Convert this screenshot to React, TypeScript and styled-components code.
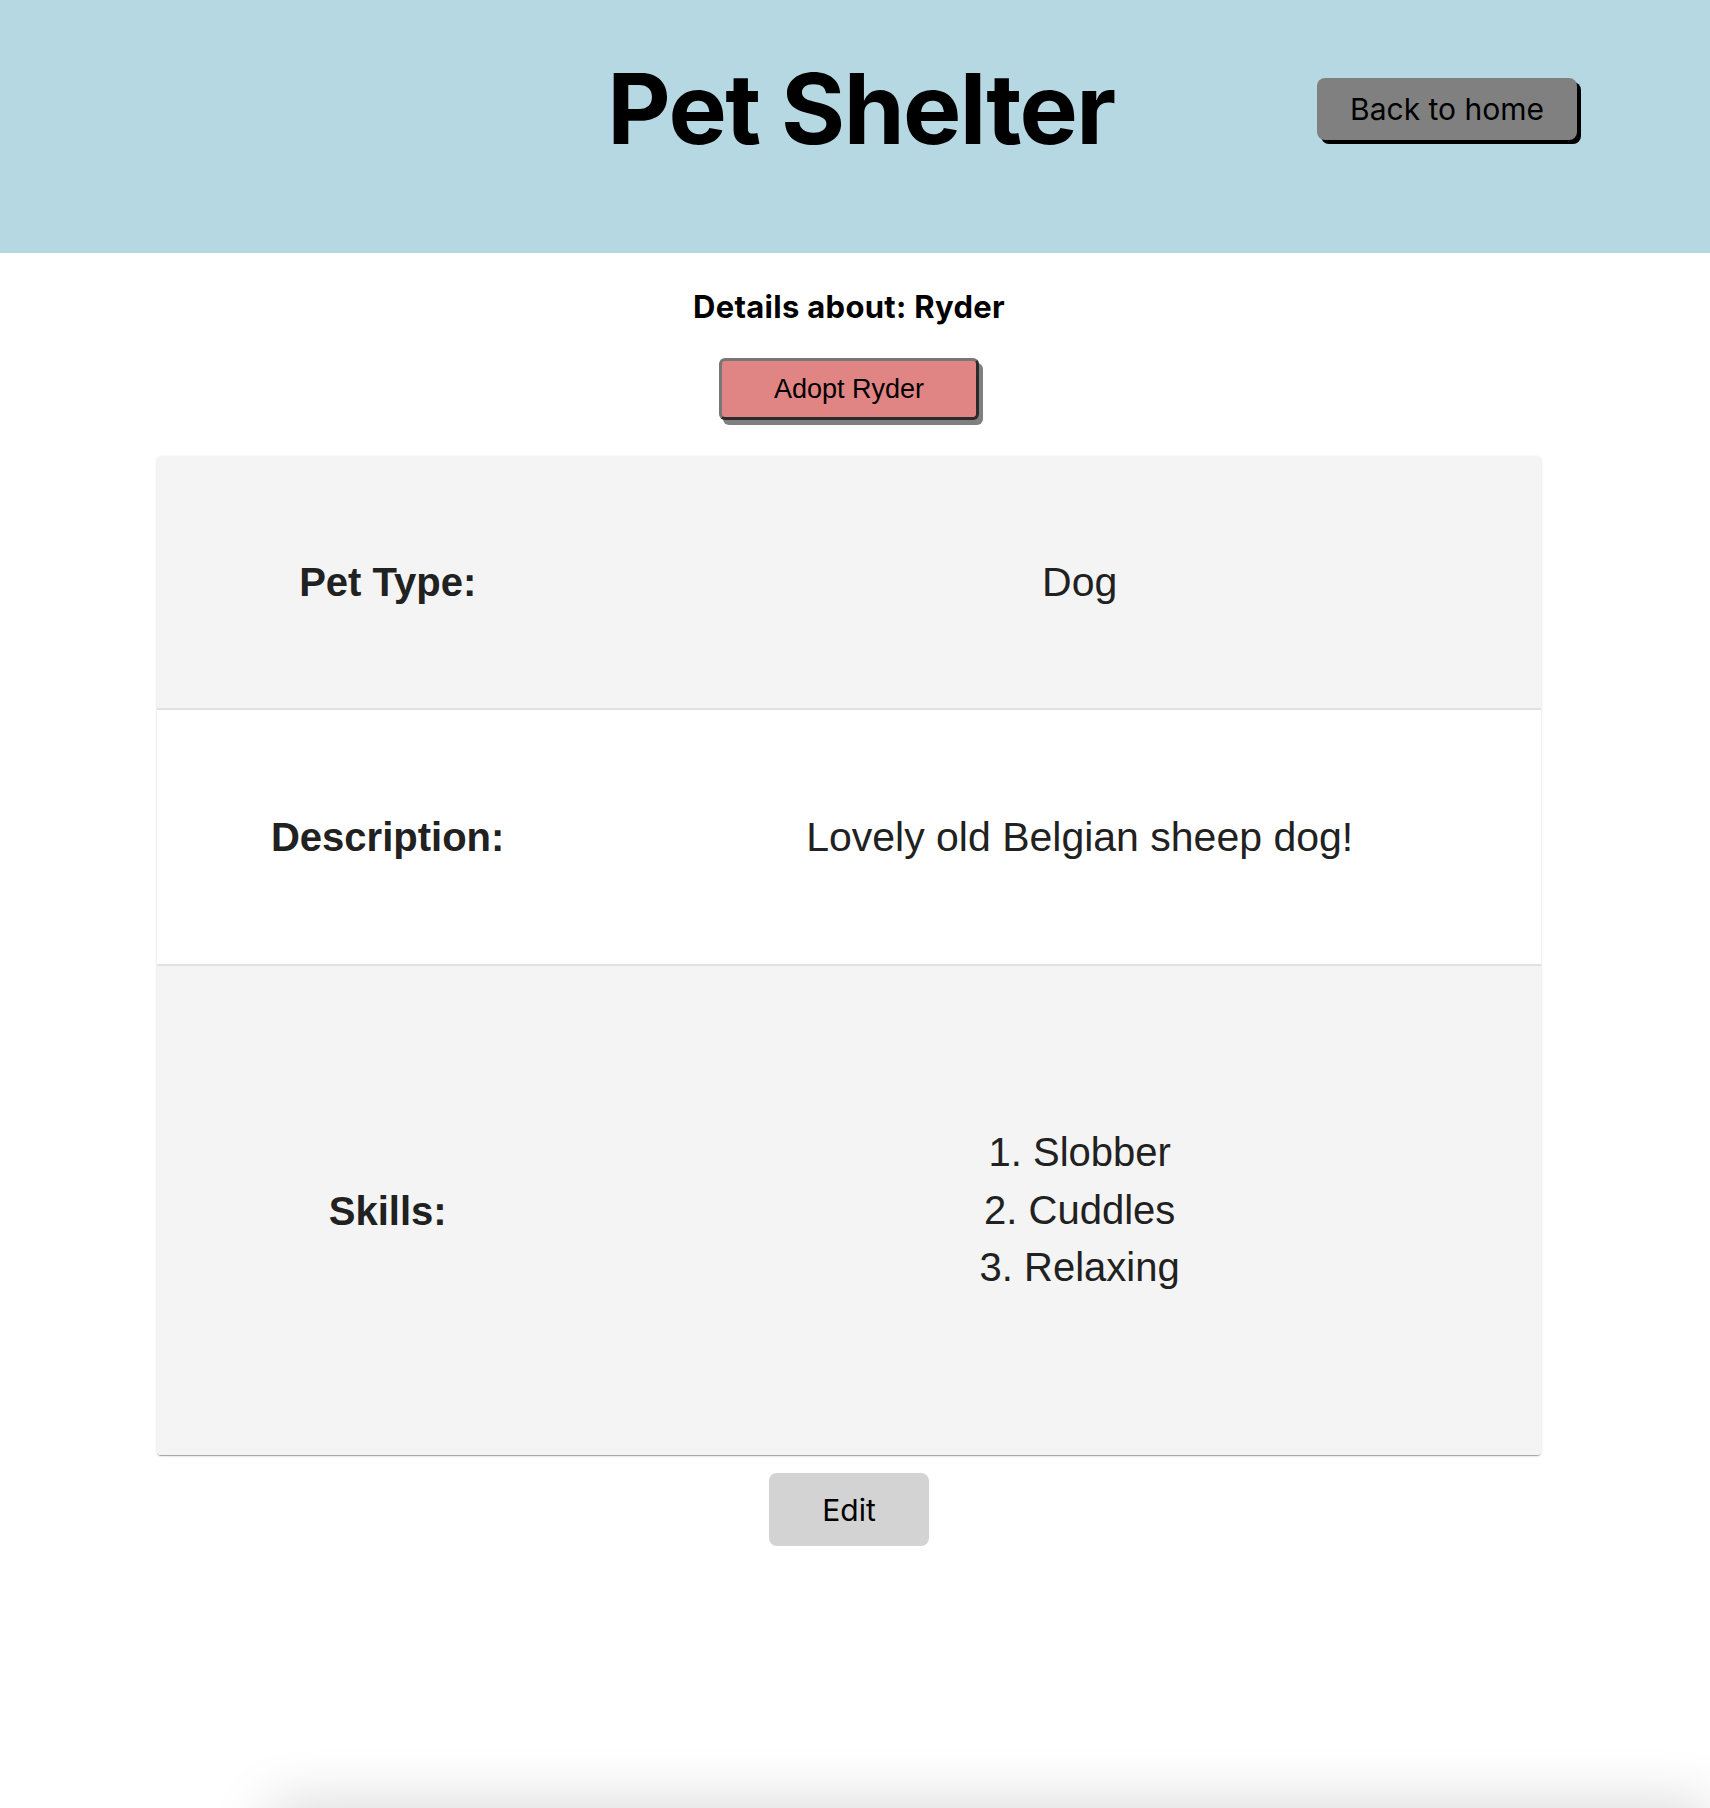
import React from "react";
import styled, { createGlobalStyle } from "styled-components";

const GlobalStyle = createGlobalStyle`
  html, body {
    margin: 0;
    padding: 0;
    background: #ffffff;
  }
  body {
    font-family: Inter, "Liberation Sans", Arial, sans-serif;
    color: #000;
  }
`;

const Page = styled.div`
  height: 1808px;
  overflow: hidden;
  display: flex;
  flex-direction: column;
`;

const Header = styled.header`
  flex-shrink: 0;
  box-sizing: border-box;
  height: 253px;
  padding-top: 54px;
  background: #b6d8e3;
  display: grid;
  grid-template-columns: 1fr auto 1fr;
  grid-template-rows: 110px;
  align-items: center;
`;

const Title = styled.h1`
  grid-column: 2;
  margin: 0 0 0 12px;
  font-family: Inter, "Liberation Sans", sans-serif;
  font-weight: 700;
  font-size: 98px;
  letter-spacing: -1.6px;
  line-height: 110px;
  color: #000;
`;

const HomeButton = styled.button`
  grid-column: 3;
  justify-self: end;
  margin-right: 133px;
  box-sizing: border-box;
  height: 62px;
  padding: 0 33px;
  border: none;
  border-radius: 8px;
  background: #808080;
  box-shadow: 4px 4px 0 #000;
  font-family: Inter, "Liberation Sans", sans-serif;
  font-size: 30px;
  color: #000;
  cursor: pointer;
`;

const Main = styled.main`
  flex: 1;
  display: flex;
  flex-direction: column;
  align-items: center;
  padding-right: 12px;
`;

const Subtitle = styled.h2`
  margin: 37px 0 0;
  font-family: Inter, "Liberation Sans", sans-serif;
  font-weight: 700;
  font-size: 31px;
  letter-spacing: 0.3px;
  line-height: 34px;
  color: #000;
`;

const AdoptButton = styled.button`
  margin-top: 34px;
  box-sizing: border-box;
  height: 62px;
  width: 260px;
  padding: 0;
  border: 3px solid;
  border-color: #777777 #2b2b2b #2b2b2b #777777;
  border-radius: 6px;
  background: #e08584;
  box-shadow: 4px 5px 0 #808080;
  font-family: "Liberation Sans", Arial, sans-serif;
  font-size: 27px;
  color: #000;
  cursor: pointer;
`;

const Card = styled.section`
  margin-top: 36px;
  width: 1384px;
  border-radius: 4px;
  overflow: hidden;
  background: #fff;
  box-shadow: 0 2px 1px -1px rgba(0, 0, 0, 0.2), 0 1px 1px 0 rgba(0, 0, 0, 0.14),
    0 1px 3px 0 rgba(0, 0, 0, 0.12);
`;

const Row = styled.div<{ $shaded: boolean; $height: number; $divider: boolean }>`
  display: grid;
  grid-template-columns: 1fr 2fr;
  align-items: center;
  height: ${(p) => p.$height}px;
  background: ${(p) => (p.$shaded ? "#f4f4f4" : "#ffffff")};
  border-bottom: ${(p) => (p.$divider ? "2px solid #e0e0e0" : "none")};
  font-family: "Liberation Sans", Arial, sans-serif;
  color: #212121;
`;

const Label = styled.div`
  text-align: center;
  font-weight: 700;
  font-size: 40px;
  line-height: 46px;
`;

const Value = styled.div`
  text-align: center;
  font-size: 41px;
  line-height: 47px;
`;

const SkillList = styled.ol`
  margin: 0;
  padding: 0;
  list-style-position: inside;
  text-align: center;
  font-size: 40px;
`;

const Skill = styled.li`
  line-height: 57.6px;
`;

const EditButton = styled.button`
  margin-top: 18px;
  box-sizing: border-box;
  width: 160px;
  height: 73px;
  border: none;
  border-radius: 8px;
  background: #d3d3d3;
  font-family: Inter, "Liberation Sans", sans-serif;
  font-size: 30px;
  color: #000;
  cursor: pointer;
`;

const FooterShadow = styled.div`
  flex-shrink: 0;
  height: 40px;
  margin-bottom: -40px;
  margin-left: 270px;
  background: #ececec;
  box-shadow: 0 0 60px rgba(0, 0, 0, 0.2);
`;

const skills = ["Slobber", "Cuddles", "Relaxing"];

export default function App() {
  return (
    <>
      <GlobalStyle />
      <Page>
        <Header>
          <Title>Pet Shelter</Title>
          <HomeButton>Back to home</HomeButton>
        </Header>
        <Main>
          <Subtitle>Details about: Ryder</Subtitle>
          <AdoptButton>Adopt Ryder</AdoptButton>
          <Card>
            <Row $shaded $height={252} $divider>
              <Label>Pet Type:</Label>
              <Value>Dog</Value>
            </Row>
            <Row $shaded={false} $height={254} $divider>
              <Label>Description:</Label>
              <Value>Lovely old Belgian sheep dog!</Value>
            </Row>
            <Row $shaded $height={489} $divider={false}>
              <Label>Skills:</Label>
              <SkillList>
                {skills.map((s) => (
                  <Skill key={s}>{s}</Skill>
                ))}
              </SkillList>
            </Row>
          </Card>
          <EditButton>Edit</EditButton>
        </Main>
        <FooterShadow />
      </Page>
    </>
  );
}
